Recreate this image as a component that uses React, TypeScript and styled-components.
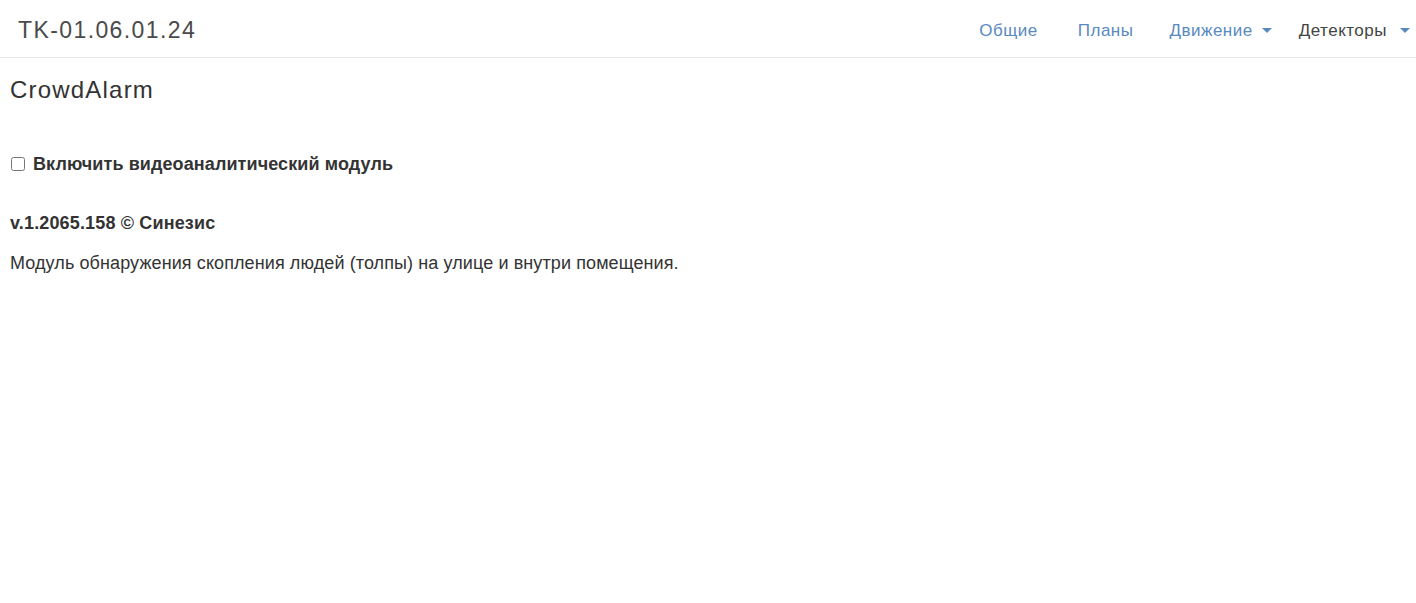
import * as React from 'react';
import styled, { createGlobalStyle } from 'styled-components';

const GlobalStyle = createGlobalStyle`
    html, body {
        margin: 0;
        padding: 0;
        background: #fff;
        font-family: 'Liberation Sans', Arial, sans-serif;
        color: #333;
    }
`;

const Navbar = styled.nav`
    display: flex;
    align-items: center;
    justify-content: space-between;
    height: 53px;
    padding: 4px 6px 0 18px;
    border-bottom: 1px solid #e7e7e7;
`;

const Brand = styled.div`
    font-size: 23px;
    color: #4a4a4a;
    letter-spacing: 1.4px;
`;

const NavList = styled.ul`
    display: flex;
    align-items: center;
    list-style: none;
    margin: 0;
    padding: 0;
`;

const NavItem = styled.li<{ offset: number }>`
    margin-left: ${(p) => p.offset}px;
`;

const NavLink = styled.a<{ active?: boolean }>`
    display: flex;
    align-items: center;
    font-size: 17px;
    letter-spacing: 0.5px;
    color: ${(p) => (p.active ? '#444' : '#5889c0')};
    text-decoration: none;
    cursor: pointer;
`;

const Caret = styled.span<{ gap: number }>`
    display: inline-block;
    width: 0;
    height: 0;
    margin-left: ${(p) => p.gap}px;
    border-top: 5px solid #5889c0;
    border-left: 5px solid transparent;
    border-right: 5px solid transparent;
`;

const Content = styled.main`
    padding: 0 10px;
`;

const Title = styled.h4`
    margin: 19px 0 0;
    font-size: 24px;
    line-height: 26px;
    letter-spacing: 1.2px;
    font-weight: normal;
    color: #333;
`;

const CheckRow = styled.label`
    display: flex;
    align-items: center;
    gap: 8px;
    margin-top: 50px;
    font-size: 18px;
    line-height: 22px;
    letter-spacing: 0.1px;
    font-weight: bold;
    color: #333;
`;

const Check = styled.input`
    width: 14px;
    height: 14px;
    margin: 0 0 0 1px;
`;

const Version = styled.p`
    margin: 37px 0 0;
    font-size: 18px;
    line-height: 22px;
    letter-spacing: 0.15px;
    font-weight: bold;
    color: #333;
`;

const Description = styled.p`
    margin: 18px 0 0;
    font-size: 18px;
    line-height: 22px;
    letter-spacing: 0.1px;
    color: #333;
`;

export default function App() {
    return (
        <>
            <GlobalStyle />
            <Navbar>
                <Brand>TK-01.06.01.24</Brand>
                <NavList>
                    <NavItem offset={0}><NavLink>Общие</NavLink></NavItem>
                    <NavItem offset={40}><NavLink>Планы</NavLink></NavItem>
                    <NavItem offset={36}><NavLink>Движение<Caret gap={9} /></NavLink></NavItem>
                    <NavItem offset={27}><NavLink active>Детекторы<Caret gap={13} /></NavLink></NavItem>
                </NavList>
            </Navbar>
            <Content>
                <Title>CrowdAlarm</Title>
                <CheckRow>
                    <Check type="checkbox" />
                    Включить видеоаналитический модуль
                </CheckRow>
                <Version>v.1.2065.158 © Синезис</Version>
                <Description>Модуль обнаружения скопления людей (толпы) на улице и внутри помещения.</Description>
            </Content>
        </>
    );
}
